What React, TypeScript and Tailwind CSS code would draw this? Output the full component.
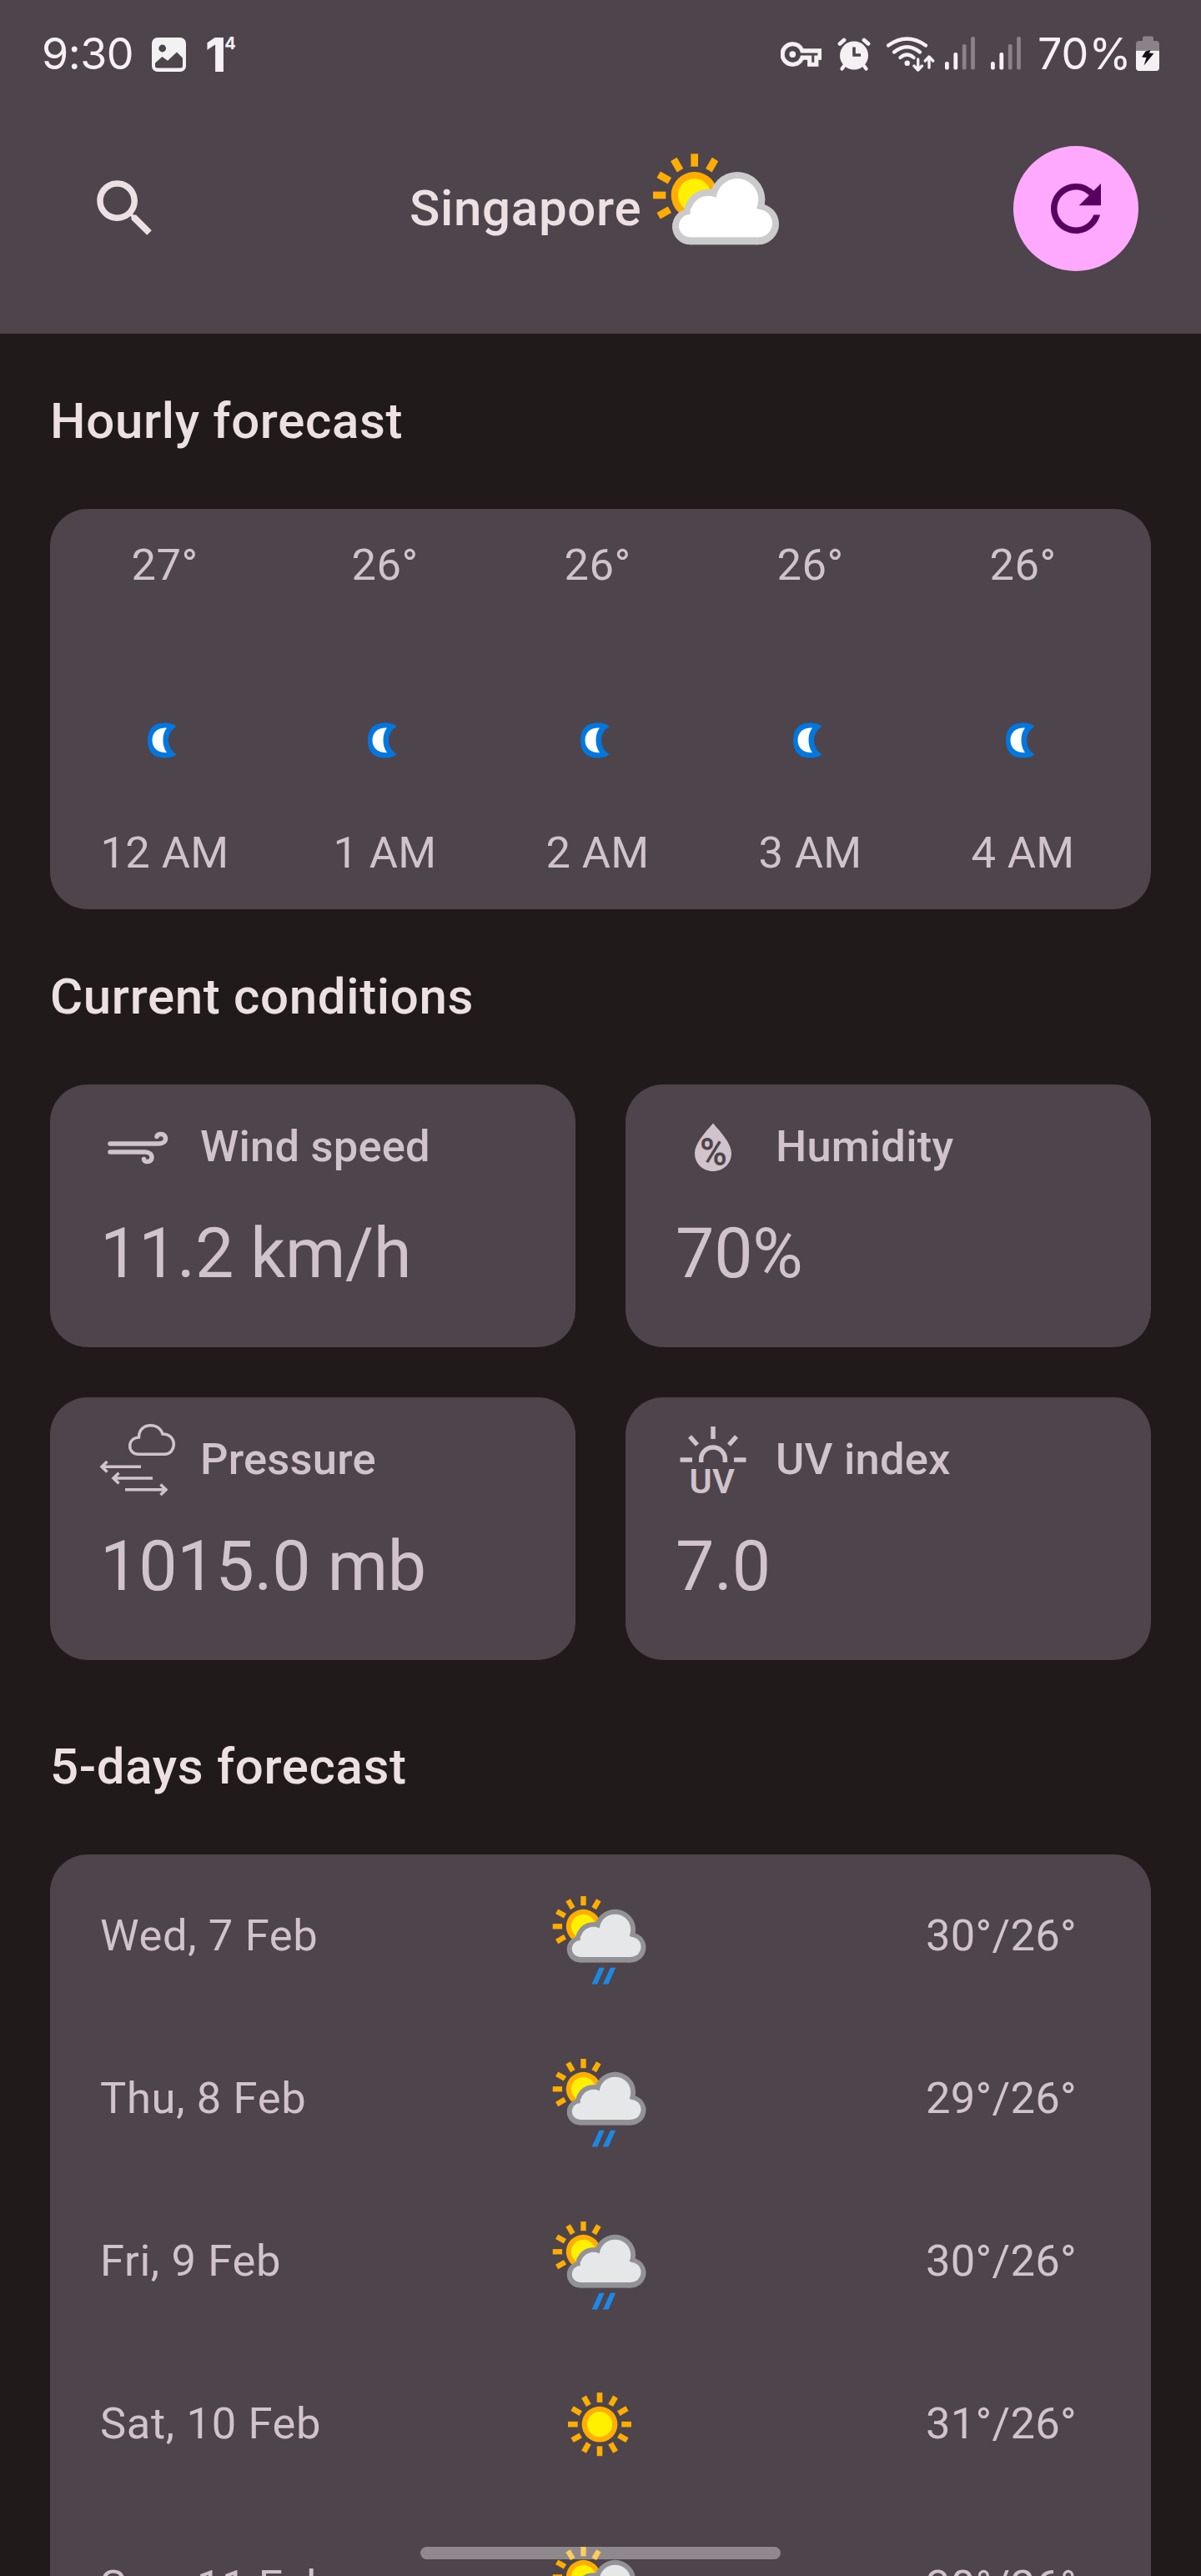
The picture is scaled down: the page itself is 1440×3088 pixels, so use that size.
import type { ReactNode } from "react";

function SunShape({ cx, cy, angles }: { cx: number; cy: number; angles: number[] }) {
  return (
    <g>
      {angles.map((a) => (
        <rect
          key={a}
          x={cx - 13}
          y={cy - 149}
          width={26}
          height={46}
          fill="#ffae00"
          transform={`rotate(${a} ${cx} ${cy})`}
        />
      ))}
      <circle cx={cx} cy={cy} r={84} fill="#ffae00" />
      <circle cx={cx} cy={cy} r={59} fill="#fff000" />
    </g>
  );
}

function SunCloud({ fill, edge }: { fill: string; edge: string }) {
  return (
    <g>
      <SunShape cx={1058} cy={252} angles={[-120, -90, -60, -30, 0, 30]} />
      <g fill={edge}>
        <circle cx={1043} cy={365} r={65} />
        <circle cx={1108} cy={318} r={88} />
        <circle cx={1212} cy={268} r={100} />
        <circle cx={1288} cy={356} r={74} />
        <rect x={1043} y={300} width={245} height={130} />
      </g>
      <g fill={fill}>
        <circle cx={1043} cy={362} r={41} />
        <circle cx={1108} cy={318} r={64} />
        <circle cx={1212} cy={268} r={76} />
        <circle cx={1288} cy={353} r={50} />
        <rect x={1043} y={300} width={245} height={103} />
      </g>
    </g>
  );
}

function PartlyCloudy() {
  return (
    <svg className="h-[140px] w-[160px] shrink-0" viewBox="900 90 480 420">
      <SunCloud fill="#ffffff" edge="#cbcbcb" />
    </svg>
  );
}

function SunRain() {
  return (
    <svg className="h-[120px] w-[120px]" viewBox="178.5 121.5 360 360">
      <g transform="matrix(0.74 0 0 0.73 -483 82.4)">
        <SunCloud fill="#e6e7e9" edge="#929296" />
      </g>
      <path d="M357 415h19l-26 59h-20zM397 415h19l-26 59h-20z" fill="#1e88e5" />
    </svg>
  );
}

function Sunny() {
  return (
    <svg className="h-[120px] w-[120px]" viewBox="178 16.5 360 360">
      <g transform="translate(358 197) scale(0.765)">
        <SunShape cx={0} cy={0} angles={[0, 30, 60, 90, 120, 150, 180, 210, 240, 270, 300, 330]} />
      </g>
    </svg>
  );
}

function Moon() {
  return (
    <svg className="h-12 w-12" viewBox="0 0 48 48">
      <path
        d="M24 2.500C10.500 2.500 4 11 4 23.500S10.500 44.500 24 44.500C31 44.500 36 43 38.500 40C32 36 29 30 29 23.500S32 11 38.500 7C36 4 31 2.500 24 2.500Z"
        fill="#0277e0"
      />
      <path d="M27 8.500C16 8 9.500 14 9.500 23.200S16 38.500 27 38.300C23.500 33 22.500 28 22.500 23.200S23.500 13 27 8.500Z" fill="#fff" />
    </svg>
  );
}

function WindIcon() {
  return (
    <svg className="h-[90px] w-[90px]" viewBox="0 0 90 90" fill="none" stroke="#d0c3cc" strokeWidth={5.5} strokeLinecap="round">
      <path d="M12 40H70C75 40 78.500 37.500 78.500 34C78.500 30.500 76 28.500 73 28.500C70.500 28.500 68.500 29.500 68 31.500" />
      <path d="M12 50H54C59 50 62 53 62 56.500C62 60 59.500 61.500 56.500 61.500C54 61.500 52.500 60 52.500 58.500" />
    </svg>
  );
}

function HumidityIcon() {
  return (
    <svg className="h-[90px] w-[90px]" viewBox="0 0 90 90">
      <path d="M45 15.500C55 27 67 40 67 51.500C67 64 57 73 45 73S23 64 23 51.500C23 40 35 27 45 15.500Z" fill="#d0c3cc" />
      <text
        x={29}
        y={65.5}
        fontFamily="Roboto"
        fontWeight={600}
        fontSize={47}
        textLength={33}
        lengthAdjust="spacingAndGlyphs"
        fill="#4e444b"
      >
        %
      </text>
    </svg>
  );
}

function PressureIcon() {
  return (
    <svg className="h-[90px] w-[90px]" viewBox="0 0 90 90" fill="none" stroke="#d0c3cc" strokeWidth={3.5}>
      <path d="M46 37.300H77C84 37.300 88.300 32 88.300 25.500C88.300 18 83 13 75 13C73 6.500 67.500 2.700 60.500 2.700C52.500 2.700 46.500 8 46.500 17C40 17.500 35.700 21.500 35.700 27.500C35.700 33 40 37.300 46 37.300Z" />
      <path d="M49 52.300H2M8.500 46L2 52.300L8.500 58.500M63 66H16M22.500 59.800L16 66L22.500 72.300M30 79.700H79M72.500 73.400L79 79.700L72.500 85.900" />
    </svg>
  );
}

function UvIcon() {
  return (
    <svg className="h-[90px] w-[90px]" viewBox="0 0 90 90" fill="none" stroke="#d0c3cc" strokeWidth={5.5}>
      <path d="M45 4V19M17 16L26 26M73 16L64 26M5.500 44H20M70 44H84.500M30.700 47V43a14.300 14 0 0 1 28.600 0V47" />
      <text
        x={16.500}
        y={83.5}
        fontFamily="Roboto"
        fontWeight={600}
        fontSize={40}
        textLength={54.500}
        lengthAdjust="spacingAndGlyphs"
        stroke="none"
        fill="#d0c3cc"
      >
        UV
      </text>
    </svg>
  );
}

function Signal() {
  return (
    <svg className="h-[46px] w-9" viewBox="0 0 36 46" fill="#f5f0f4">
      <rect x={0} y={32} width={4.8} height={9.500} rx={2} />
      <rect x={10.400} y={21} width={4.800} height={20.500} rx={2} />
      <rect x={20.800} y={11} width={4.800} height={30.500} rx={2} opacity={0.36} />
      <rect x={31.100} y={2} width={4.800} height={39.500} rx={2} opacity={0.36} />
    </svg>
  );
}

function StatusBar() {
  return (
    <div className="flex h-[130px] items-center pr-[50px] pl-[50px] text-[#f5f0f4]">
      <span className="w-[132px] font-['Inter'] text-[52px] leading-none font-normal tracking-[-0.5px]">9:30</span>
      <svg className="h-[41px] w-[41px]" viewBox="0 0 41 41">
        <rect width={41} height={41} rx={7} fill="#f2f2f2" />
        <circle cx={12.700} cy={13} r={4.400} fill="#4e444b" />
        <path d="M4 30.500L12.500 23L19 27.800L30 17.500L37 24.500V34a2.500 2.500 0 0 1-2.500 2.500H6.500A2.500 2.500 0 0 1 4 34Z" fill="#4e444b" />
      </svg>
      <div className="ml-[23px] flex items-start font-['Inter'] leading-none font-extrabold">
        <span className="text-[57px] leading-[57px]">1</span>
        <span className="-ml-0.5 pt-[5px] text-[20px] leading-[20px] font-bold">4</span>
      </div>
      <div className="ml-auto flex h-[46px] items-center">
        <svg className="h-[46px] w-[49px]" viewBox="0 0.730 24 22.530" fill="#f5f0f4">
          <path d="M22 19h-6v-4h-2.680c-1.140 2.420-3.600 4-6.320 4-3.860 0-7-3.140-7-7s3.140-7 7-7c2.720 0 5.170 1.580 6.320 4H24v6h-2v4zm-4-2h2v-4h2v-2H11.940l-.23-.67C11.010 8.340 9.110 7 7 7c-2.760 0-5 2.240-5 5s2.240 5 5 5c2.110 0 4.010-1.340 4.710-3.330l.23-.67H18v4z" fillRule="evenodd" stroke="#f5f0f4" strokeWidth={0.500} />
          <circle cx={7} cy={12} r={1.900} />
        </svg>
        <svg className="ml-[19px] h-[46px] w-[40px]" viewBox="0 0 40 46" stroke="#f5f0f4" strokeLinecap="round" fill="none">
          <circle cx={20} cy={24.500} r={17} fill="#f5f0f4" stroke="none" />
          <path d="M3 10.500L8 6M37 10.500L32 6" strokeWidth={4.800} />
          <path d="M8 37L5.500 40.500M32 37L34.500 40.500" strokeWidth={4.200} />
          <path d="M20 14.500V24H28" stroke="#4e444b" strokeWidth={3.600} strokeLinecap="butt" />
        </svg>
        <svg className="ml-[19px] h-[46px] w-[58px]" viewBox="0 0 58 46" stroke="#f5f0f4" strokeLinecap="round" strokeLinejoin="round" fill="none" strokeWidth={4.200}>
          <path d="M2 12.500Q24.500 -3.500 47 12.500M9 20.500Q24.500 8 40 20.500M16.500 27Q24.500 20 32.500 27" />
          <circle cx={24.700} cy={33.700} r={3.200} fill="#f5f0f4" stroke="none" />
          <path d="M37.700 29V41.500M33 37L37.700 42L42.400 37M51 39V26.500M46.300 31L51 26L55.700 31" strokeWidth={3.400} />
        </svg>
        <div className="ml-3 flex gap-[19px]">
          <Signal />
          <Signal />
        </div>
        <span className="ml-[20px] w-[118px] font-['Inter'] text-[52px] leading-[46px] tracking-[0px]">70%</span>
        <svg className="h-[46px] w-7" viewBox="0 0 28 46" fill="#f5f0f4">
          <path d="M8 7V3.500Q8 1.500 10 1.500H19Q21 1.500 21 3.500V7H24Q28 7 28 11V18.700H0V11Q0 7 4 7Z" opacity={0.36} />
          <path d="M0 18.700H28V39Q28 43 24 43H4Q0 43 0 39Z" />
          <path d="M11.500 19.500L17.500 18L16 21.500L21.500 22L9.500 36.500L12.500 27L7 26.500Z" fill="#151215" />
        </svg>
      </div>
    </div>
  );
}

function Heading({ children }: { children: ReactNode }) {
  return (
    <h2 className="flex h-[210px] items-center text-[60px] leading-[90px] font-medium tracking-[0.65px] text-[#ece0e3]">
      {children}
    </h2>
  );
}

function Condition({ icon, label, value }: { icon: ReactNode; label: string; value: string }) {
  return (
    <div className="h-[315px] rounded-[45px] bg-[#4e444b] px-[60px] pt-[31px]">
      <div className="flex items-start gap-[30px] text-[52.500px] leading-[75px] font-medium tracking-[0.2px]">
        {icon}
        <span className="pt-[6px]">{label}</span>
      </div>
      <div className="mt-[29px] text-[82.500px] leading-[105px] tracking-[-0.2px]">{value}</div>
    </div>
  );
}

const hours = [
  { t: "27°", h: "12 AM" },
  { t: "26°", h: "1 AM" },
  { t: "26°", h: "2 AM" },
  { t: "26°", h: "3 AM" },
  { t: "26°", h: "4 AM" },
];

const days = [
  { d: "Wed, 7 Feb", t: "30°/26°", sunny: false },
  { d: "Thu, 8 Feb", t: "29°/26°", sunny: false },
  { d: "Fri, 9 Feb", t: "30°/26°", sunny: false },
  { d: "Sat, 10 Feb", t: "31°/26°", sunny: true },
  { d: "Sun, 11 Feb", t: "30°/26°", sunny: false },
];

export default function App() {
  return (
    <div className="relative h-[3088px] w-[1440px] overflow-hidden bg-[#201a1b] font-['Roboto',sans-serif] text-[#d0c3cc]">
      <header className="h-[400px] bg-[#4e444b]">
        <StatusBar />
        <div className="mt-[45px] flex h-[150px] items-center pr-[75px] pl-[105px]">
          <svg className="h-[90px] w-[90px]" viewBox="0 0 24 24" fill="#ece0e3">
            <path d="M15.500 14h-.79l-.28-.27C15.410 12.590 16 11.110 16 9.500 16 5.910 13.090 3 9.500 3S3 5.910 3 9.500 5.910 16 9.500 16c1.610 0 3.090-.59 4.230-1.570l.27.28v.79l5 4.990L20.490 19l-4.990-5zm-6 0C7.010 14 5 11.990 5 9.500S7.010 5 9.500 5 14 7.010 14 9.500 11.990 14 9.500 14z" />
          </svg>
          <div className="ml-[296px] flex items-center">
            <h1 className="w-[289px] text-[60px] leading-[90px] font-medium tracking-[0.7px] text-[#ece0e3]">Singapore</h1>
            <PartlyCloudy />
          </div>
          <button className="ml-auto flex h-[150px] w-[150px] items-center justify-center rounded-full bg-[#ffa9fe]">
            <svg className="h-[90px] w-[90px]" viewBox="0 0 24 24" fill="#570060">
              <path d="M17.650 6.350C16.200 4.900 14.210 4 12 4c-4.420 0-7.990 3.580-7.990 8s3.570 8 7.990 8c3.730 0 6.840-2.550 7.730-6h-2.080c-.82 2.330-3.040 4-5.650 4-3.310 0-6-2.690-6-6s2.690-6 6-6c1.660 0 3.140.69 4.220 1.780L13 11h7V4l-2.350 2.350z" />
            </svg>
          </button>
        </div>
      </header>

      <main className="px-[60px]">
        <Heading>Hourly forecast</Heading>
        <section className="flex h-[480px] rounded-[45px] bg-[#4e444b] py-[30px] pl-px text-[52.500px] leading-[75px] tracking-[0.4px]">
          {hours.map(({ t, h }, i) => (
            <div
              key={h}
              className={`flex flex-col items-center justify-between ${i === 0 ? "w-[273px]" : "w-[255px]"}`}
            >
              <span>{t}</span>
              <div className="mt-[75px] mr-px">
                <Moon />
              </div>
              <span>{h}</span>
            </div>
          ))}
        </section>

        <Heading>Current conditions</Heading>
        <section className="grid grid-cols-2 gap-[60px]">
          <Condition icon={<WindIcon />} label="Wind speed" value="11.2 km/h" />
          <Condition icon={<HumidityIcon />} label="Humidity" value="70%" />
          <Condition icon={<PressureIcon />} label="Pressure" value="1015.0 mb" />
          <Condition icon={<UvIcon />} label="UV index" value="7.0" />
        </section>

        <div className="pt-[23px]">
          <Heading>5-days forecast</Heading>
        </div>
        <section className="rounded-t-[45px] bg-[#4e444b] pr-[89px] pl-[60px] text-[52.500px] leading-[75px]">
          {days.map(({ d, t, sunny }) => (
            <div key={d} className="flex h-[195px] items-center">
              <span className="w-[539px] tracking-[0.65px]">{d}</span>
              {sunny ? <Sunny /> : <SunRain />}
              <span className="ml-auto tracking-[0.3px]">{t}</span>
            </div>
          ))}
        </section>
      </main>

      <div className="absolute bottom-5 left-[504px] h-[15px] w-[432px] rounded-full bg-white/37" />
    </div>
  );
}
